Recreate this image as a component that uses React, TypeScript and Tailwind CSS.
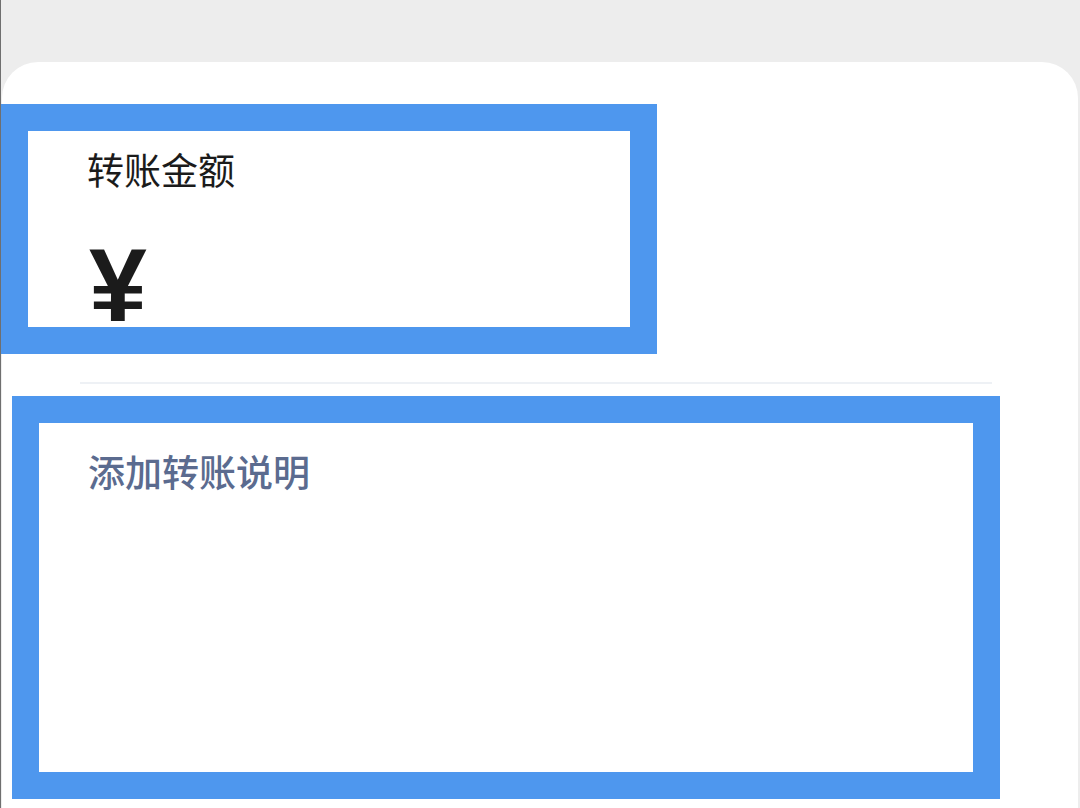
const cjk = { fontFamily: '"Noto Sans CJK SC", "Noto Sans", sans-serif' };

export default function App() {
  return (
    <div className="w-[1080px] h-[808px] overflow-hidden bg-[#ededed] border-l border-[#6f6f6f] pt-[62px]">
      <div className="bg-white rounded-t-[36px] h-full pt-[42px] ml-px mr-[2px]" style={cjk}>
        <div className="-ml-px w-[656px] h-[250px] border-[27px] border-[#4e97ee] overflow-hidden pl-[59px] pt-[15px]">
          <div className="text-[37px] leading-[46px] text-[#1b1b1b]">转账金额</div>
          <div
            className="mt-[41px] ml-[2px] text-[104px] leading-none font-bold text-[#1b1b1b]"
            style={{ fontFamily: '"Liberation Sans", Arial, sans-serif' }}
          >
            ¥
          </div>
        </div>
        <div className="mt-[28px] ml-[78px] mr-[86px] h-[2px] bg-[#eef1f5]" />
        <div className="mt-[12px] ml-[10px] w-[988px] h-[403px] border-[27px] border-[#4e97ee] pl-[49px] pt-[25px]">
          <div className="text-[37px] leading-[46px] font-medium text-[#5b6b8f]">添加转账说明</div>
        </div>
      </div>
    </div>
  );
}
